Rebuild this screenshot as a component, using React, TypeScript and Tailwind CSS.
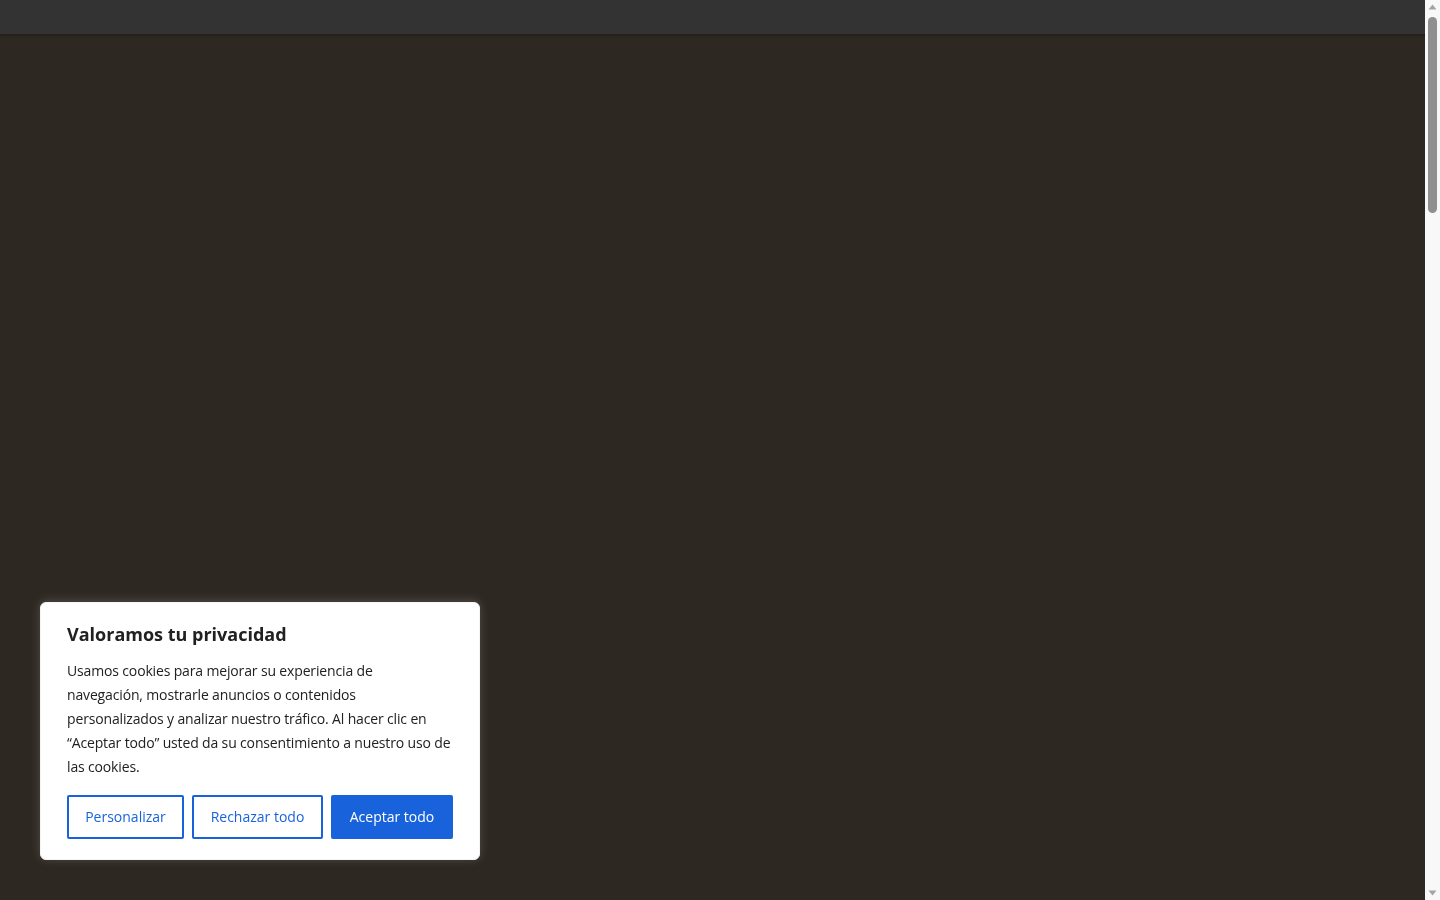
import React from "react";

export default function App() {
  const font = { fontFamily: '"Open Sans", "Liberation Sans", sans-serif' };
  return (
    <div className="min-h-[4000px] bg-[#2e2822]" style={font}>
      <header className="h-[34px] bg-[#333333] shadow-[0_1px_3px_rgba(0,0,0,0.35)]" />

      {/* fake browser scrollbar */}
      <div className="fixed right-0 top-0 h-screen w-[15px] bg-[#f8f8f8]">
        <svg className="absolute left-0 top-0" width="15" height="15" viewBox="0 0 15 15">
          <polygon points="3.5,9.5 7.5,4.5 11.5,9.5" fill="#a3a3a3" />
        </svg>
        <div className="absolute left-[3px] top-[17px] h-[196px] w-[9px] rounded-[5px] bg-[#8f8f8f]" />
        <svg className="absolute left-0 bottom-0" width="15" height="15" viewBox="0 0 15 15">
          <polygon points="3.5,5.5 11.5,5.5 7.5,10.5" fill="#a3a3a3" />
        </svg>
      </div>

      <div className="fixed left-[40px] bottom-[40px] w-[440px] rounded-[6px] border border-[#f4f4f4] bg-white px-[26px] pt-[21px] pb-[20px] shadow-[0_-1px_10px_0_rgba(172,171,171,0.3)]">
        <p className="mb-[15px] text-[18px] leading-[20px] font-bold text-[#212121]">
          Valoramos tu privacidad
        </p>
        <div className="whitespace-nowrap text-[14px] leading-6 tracking-[-0.15px] text-[#212121]">
          <p>Usamos cookies para mejorar su experiencia de</p>
          <p>navegación, mostrarle anuncios o contenidos</p>
          <p>personalizados y analizar nuestro tráfico. Al hacer clic en</p>
          <p>“Aceptar todo” usted da su consentimiento a nuestro uso de</p>
          <p>las cookies.</p>
        </div>
        <div className="mt-[16px] flex gap-2">
          <button className="h-[44px] w-[117px] rounded-[2px] border-2 border-[#1863dc] bg-white pb-[1px] text-[14px] font-medium text-[#1863dc]">
            Personalizar
          </button>
          <button className="h-[44px] w-[131px] rounded-[2px] border-2 border-[#1863dc] bg-white pb-[1px] text-[14px] font-medium text-[#1863dc]">
            Rechazar todo
          </button>
          <button className="h-[44px] w-[122px] rounded-[2px] border-2 border-[#1863dc] bg-[#1863dc] pb-[1px] text-[14px] font-medium text-white">
            Aceptar todo
          </button>
        </div>
      </div>
    </div>
  );
}
